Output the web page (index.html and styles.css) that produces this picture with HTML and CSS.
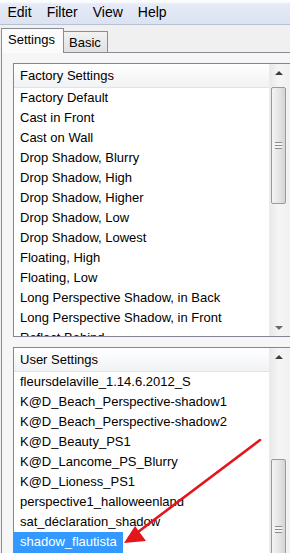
FILE: index.html
```html
<!DOCTYPE html>
<html lang="en">
<head>
    <meta charset="UTF-8">
    <title>Settings</title>
    <link rel="stylesheet" href="styles.css">
</head>
<body>
    <div class="window">
        <ul class="menubar">
            <li>Edit</li>
            <li>Filter</li>
            <li>View</li>
            <li>Help</li>
        </ul>
        <div class="tabs">
            <div class="tab active">Settings</div>
            <div class="tab">Basic</div>
        </div>
        <div class="panel">
            <div class="listbox factory">
                <div class="list">
                    <div class="list-head">Factory Settings</div>
                    <div class="row">Factory Default</div>
                    <div class="row">Cast in Front</div>
                    <div class="row">Cast on Wall</div>
                    <div class="row">Drop Shadow, Blurry</div>
                    <div class="row">Drop Shadow, High</div>
                    <div class="row">Drop Shadow, Higher</div>
                    <div class="row">Drop Shadow, Low</div>
                    <div class="row">Drop Shadow, Lowest</div>
                    <div class="row">Floating, High</div>
                    <div class="row">Floating, Low</div>
                    <div class="row">Long Perspective Shadow, in Back</div>
                    <div class="row">Long Perspective Shadow, in Front</div>
                    <div class="row">Reflect Behind</div>
                </div>
                <div class="scrollbar">
                    <div class="arrow up"></div>
                    <div class="thumb thumb-top"><span class="grip"></span></div>
                    <div class="track-fill"></div>
                    <div class="arrow down"></div>
                </div>
            </div>
            <div class="listbox user">
                <div class="list">
                    <div class="list-head">User Settings</div>
                    <div class="row">fleursdelaville_1.14.6.2012_S</div>
                    <div class="row">K@D_Beach_Perspective-shadow1</div>
                    <div class="row">K@D_Beach_Perspective-shadow2</div>
                    <div class="row">K@D_Beauty_PS1</div>
                    <div class="row">K@D_Lancome_PS_Blurry</div>
                    <div class="row">K@D_Lioness_PS1</div>
                    <div class="row">perspective1_halloweenland</div>
                    <div class="row">sat_déclaration_shadow</div>
                    <div class="row"><span class="selected">shadow_flautista</span></div>
                </div>
                <div class="scrollbar">
                    <div class="arrow up"></div>
                    <div class="thumb thumb-bottom"><span class="grip"></span></div>
                </div>
            </div>
        </div>
        <!-- red annotation arrow drawn over the list -->
        <svg class="pointer" width="290" height="553" viewBox="0 0 290 553">
            <line x1="260" y1="440" x2="138" y2="532" stroke="#e3161d" stroke-width="2.6" stroke-linecap="round"/>
            <polygon points="124,543 135,526 146,541" fill="#e3161d"/>
        </svg>
    </div>
</body>
</html>
```

FILE: styles.css
```css
body {
    margin: 0;
    font-family: 'Liberation Sans', Arial, sans-serif;
    color: #000;
    background-color: #f0f0f0;
}
.window {
    position: relative;
    width: 290px;
    height: 553px;
    overflow: hidden;
}
.menubar {
    list-style: none;
    display: flex;
    margin: 0;
    padding: 0;
    height: 24px;
    line-height: 25px;
    font-size: 14px;
    background: linear-gradient(#fbfcfe 0, #fbfcfe 2px, #e6ebf6 4px, #dbe2f1 100%);
    border-bottom: 1px solid #b9c0cf;
}
.menubar li {
    padding: 0 7.5px;
}
.tabs {
    display: flex;
    align-items: flex-end;
    margin-top: 3px;
    padding-left: 1px;
    height: 24px;
    font-size: 13px;
}
.tab {
    position: relative;
    z-index: 1;
    height: 20px;
    line-height: 21px;
    padding: 0 6px 0 5px;
    border: 1px solid #898c95;
    border-left: none;
    border-bottom: none;
    background: linear-gradient(#f2f2f2, #e1e1e1);
}
.tab.active {
    height: 24px;
    line-height: 22px;
    width: 55px;
    padding: 0 0 0 6px;
    border-left: 1px solid #898c95;
    margin-bottom: -1px;
    background: #fbfbfb;
}
.panel {
    margin-left: 1px;
    height: 500px;
    padding: 10px 0 0 11px;
    border-top: 1px solid #898c95;
    border-left: 1px solid #898c95;
    background-color: #f6f6f6;
}
.listbox {
    display: flex;
    width: 300px;
    border: 1px solid #828790;
    background-color: #fff;
    font-size: 13px;
}
.listbox.factory {
    height: 272px;
}
.listbox.user {
    height: 300px;
    margin-top: 10px;
}
.list {
    width: 255px;
    overflow: hidden;
}
.list-head {
    height: 23px;
    line-height: 23px;
    padding-left: 6px;
    border-bottom: 1px solid #e2e3e6;
    background: linear-gradient(#ffffff, #f1f2f4);
}
.row {
    height: 20px;
    line-height: 20px;
    padding-left: 6px;
    white-space: nowrap;
}
.selected {
    display: inline-block;
    margin-left: -6px;
    padding: 0 6px 2px;
    background-color: #3399ff;
    color: #fff;
}
.scrollbar {
    display: flex;
    flex-direction: column;
    width: 22px;
    border-left: 1px solid #ececec;
    background: linear-gradient(90deg, #e9e9e9, #f5f5f5 40%, #f0f0f0);
}
.arrow {
    display: flex;
    justify-content: center;
    align-items: center;
    height: 17px;
    width: 17px;
}
.arrow::after {
    content: "";
    border-left: 4px solid transparent;
    border-right: 4px solid transparent;
}
.arrow.up::after {
    border-bottom: 4px solid #3c3c3c;
}
.arrow.down::after {
    border-top: 4px solid #6a6a6a;
}
.thumb {
    display: flex;
    justify-content: center;
    align-items: center;
    width: 15px;
    margin-left: 1px;
    border: 1px solid #9a9a9a;
    border-radius: 2px;
    background: linear-gradient(90deg, #f4f4f4, #e6e6e6 50%, #d4d4d4);
    box-sizing: border-box;
}
.thumb-top {
    height: 117px;
    margin-top: 6px;
}
.thumb-bottom {
    height: 140px;
    margin-top: 94px;
}
.grip {
    width: 7px;
    height: 7px;
    background: repeating-linear-gradient(#8c8c8c 0, #8c8c8c 1px, #f6f6f6 1px, #f6f6f6 3px);
}
.track-fill {
    flex: 1;
}
.pointer {
    position: absolute;
    top: 0;
    left: 0;
    pointer-events: none;
}
```
